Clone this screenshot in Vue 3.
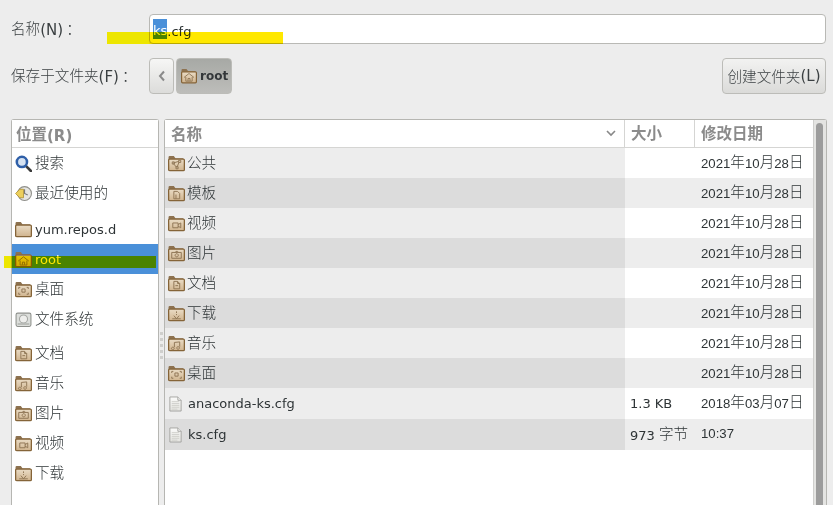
<script setup>
const emblems = {
  share: 'M5 7.500l5-1.500M5 8l3 3.500M10.500 6.500l-2 5M4 6.500h2v2H4zM10 5h2v2h-2zM7.500 11h2v2h-2z',
  template: 'M5.500 6h3.500l2 2v5H5.500zM7.500 9v4',
  video: 'M4.500 7.500h5v4.500h-5zM9.500 9l2.500-1.500v4.500L9.500 10.500',
  picture: 'M3.500 7h9v5.500h-9zM6.500 7l1-1h1.500l1 1M8.200 8.200a1.500 1.500 0 1 0 .01 0',
  document: 'M5.500 6h3.500l2 2v5H5.500zM9 6v2h2M7 10h2.500',
  download: 'M8 6v1.500M8 8.500v1M5.500 10l2.500 3 2.500-3M4 13h8',
  music: 'M6 7v4.500M11 6.500v4.500M6 7l5-.500M4.500 11.500a1.300 1.200 0 1 0 .01 0M9.500 11a1.300 1.200 0 1 0 .01 0',
  desktop: 'M3.500 7.500V6h1.500M11 6h1.500v1.500M12.500 11v1.500H11M5 12.500H3.500V11M6.500 7.500h3v3h-3z',
  home: 'M3 9.500L8 5.500l5 4M4.800 9v4.200h6.400V9M7 13v-2.500h2V13',
}

const places = [
  { name: '搜索', icon: 'search' },
  { name: '最近使用的', icon: 'recent', gap: true },
  { name: 'yum.repos.d', icon: 'folder' },
  { name: 'root', icon: 'folder', emblem: 'home', active: true },
  { name: '桌面', icon: 'folder', emblem: 'desktop' },
  { name: '文件系统', icon: 'disk', sep: true },
  { name: '文档', icon: 'folder', emblem: 'document' },
  { name: '音乐', icon: 'folder', emblem: 'music' },
  { name: '图片', icon: 'folder', emblem: 'picture' },
  { name: '视频', icon: 'folder', emblem: 'video' },
  { name: '下载', icon: 'folder', emblem: 'download' },
]

const files = [
  { name: '公共', emblem: 'share', size: '', date: '2021年10月28日' },
  { name: '模板', emblem: 'template', size: '', date: '2021年10月28日' },
  { name: '视频', emblem: 'video', size: '', date: '2021年10月28日' },
  { name: '图片', emblem: 'picture', size: '', date: '2021年10月28日' },
  { name: '文档', emblem: 'document', size: '', date: '2021年10月28日' },
  { name: '下载', emblem: 'download', size: '', date: '2021年10月28日' },
  { name: '音乐', emblem: 'music', size: '', date: '2021年10月28日' },
  { name: '桌面', emblem: 'desktop', size: '', date: '2021年10月28日' },
  { name: 'anaconda-ks.cfg', file: true, size: '1.3 KB', date: '2018年03月07日' },
  { name: 'ks.cfg', file: true, size: '973 字节', date: '10:37' },
]

// CJK is drawn a little larger than latin in this theme, so split the runs
const runs = (text) => (text.match(/[\u4e00-\u9fff]+|[^\u4e00-\u9fff]+/g) || []).map((t) => ({ t, zh: /[\u4e00-\u9fff]/.test(t) }))
</script>

<template>
  <div class="dialog">
    <svg class="defs" width="0" height="0" aria-hidden="true">
      <defs>
        <linearGradient id="folderBody" x1="0" y1="0" x2="0" y2="1">
          <stop offset="0" stop-color="#eadcc6" />
          <stop offset="1" stop-color="#d0b48e" />
        </linearGradient>
        <linearGradient id="paper" x1="0" y1="0" x2="0" y2="1">
          <stop offset="0" stop-color="#fbfbfa" />
          <stop offset="1" stop-color="#e4e4e0" />
        </linearGradient>
      </defs>
    </svg>

    <div class="form-row name-row">
      <label class="form-label"><span class="zh">名称</span>(N)<span class="zh colon">：</span></label>
      <div class="entry"><span class="selected">ks</span>.cfg</div>
    </div>

    <div class="form-row folder-row">
      <label class="form-label"><span class="zh">保存于文件夹</span>(F)<span class="zh colon">：</span></label>
      <button type="button" class="btn back-btn" aria-label="back">
        <svg width="8" height="12" viewBox="0 0 8 12"><path d="M6 1.500L2 6l4 4.500" fill="none" stroke="#8a8a8a" stroke-width="2" /></svg>
      </button>
      <button type="button" class="btn path-btn">
        <svg class="ico" width="16" height="16" viewBox="0 0 16 16">
          <path d="M.5 14V2q0-1 1-1h4l1.500 2h7q.5 0 .5 1V14z" fill="#8d7250" />
          <rect x=".6" y="3.800" width="14.800" height="11" rx="1" fill="url(#folderBody)" stroke="#856438" stroke-width="1.200" />
          <path :d="emblems.home" fill="none" stroke="#8f7655" stroke-width=".9" />
        </svg>
        <span>root</span>
      </button>
      <button type="button" class="btn create-btn"><span class="zh">创建文件夹</span>(L)</button>
    </div>

    <div class="panes">
      <aside class="sidebar">
        <div class="col-head side-head"><span class="zh">位置</span>(R)</div>
        <ul class="places">
          <li v-for="p in places" :key="p.name" :class="['place', { active: p.active, gap: p.gap, sep: p.sep }]">
            <svg class="ico" width="17" height="17" viewBox="0 0 16 16">
              <template v-if="p.icon === 'folder'">
                <path d="M.5 14V2q0-1 1-1h4l1.500 2h7q.5 0 .5 1V14z" fill="#8d7250" />
                <rect x=".6" y="3.800" width="14.800" height="11" rx="1" fill="url(#folderBody)" stroke="#856438" stroke-width="1.200" />
                <path v-if="p.emblem" :d="emblems[p.emblem]" fill="none" stroke="#8f7655" stroke-width=".9" />
              </template>
              <template v-else-if="p.icon === 'search'">
                <path d="M10 10l5 5" stroke="#3a3a3a" stroke-width="2.500" stroke-linecap="round" />
                <circle cx="6.500" cy="6.500" r="4.800" fill="#d5e2f2" stroke="#2f5fa8" stroke-width="2.400" />
              </template>
              <template v-else-if="p.icon === 'recent'">
                <circle cx="9" cy="8" r="6.500" fill="#e6e6e2" stroke="#8f8f8a" />
                <path d="M9 4v4l3 1.500" fill="none" stroke="#777" />
                <path d="M.5 8l4-4h3.500v8H4.500z" fill="#eccf5c" stroke="#a88a2a" stroke-width=".7" />
              </template>
              <template v-else>
                <rect x="1" y="2" width="14" height="12.500" rx="1.500" fill="#dcdedb" stroke="#8e908c" />
                <circle cx="8" cy="7.500" r="3.800" fill="#eeeeec" stroke="#a4a6a2" />
                <path d="M2.500 11.500h11v1.500h-11z" fill="#b3b5b1" />
              </template>
            </svg>
            <span class="label"><span v-for="r in runs(p.name)" :key="r.t" :class="{ zh: r.zh }">{{ r.t }}</span></span>
          </li>
        </ul>
      </aside>

      <div class="grip"><i v-for="n in 5" :key="n"></i></div>

      <section class="browser">
        <div class="list">
          <div class="list-head">
            <div class="col-head c-name"><span class="zh">名称</span>
              <svg width="10" height="7" viewBox="0 0 10 7"><path d="M1 1l4 4 4-4" fill="none" stroke="#888" stroke-width="1.600" /></svg>
            </div>
            <div class="col-head c-size"><span class="zh">大小</span></div>
            <div class="col-head c-date"><span class="zh">修改日期</span></div>
          </div>
          <div v-for="f in files" :key="f.name" :class="['file-row', { plain: f.file }]">
            <div class="c-name cell">
              <svg v-if="f.file" class="ico file-ico" width="15" height="18" viewBox="0 0 16 18">
                <path d="M2 1.500h8.500l3.500 3.500v11.500H2z" fill="url(#paper)" stroke="#a3a3a0" stroke-linejoin="round" />
                <path d="M10.500 1.500V5H14" fill="#f4f4f2" stroke="#a3a3a0" />
                <path d="M4 6.500h8M4 8.500h8M4 10.500h8M4 12.500h8M4 14.500h6" stroke="#cfcfcb" />
              </svg>
              <svg v-else class="ico" width="17" height="17" viewBox="0 0 16 16">
                <path d="M.5 14V2q0-1 1-1h4l1.500 2h7q.5 0 .5 1V14z" fill="#8d7250" />
                <rect x=".6" y="3.800" width="14.800" height="11" rx="1" fill="url(#folderBody)" stroke="#856438" stroke-width="1.200" />
                <path :d="emblems[f.emblem]" fill="none" stroke="#8f7655" stroke-width=".9" />
              </svg>
              <span class="label"><span v-for="r in runs(f.name)" :key="r.t" :class="{ zh: r.zh }">{{ r.t }}</span></span>
            </div>
            <div class="c-size cell"><span class="text"><span v-for="r in runs(f.size)" :key="r.t" :class="{ zh: r.zh }">{{ r.t }}</span></span></div>
            <div class="c-date cell date"><span class="text"><span v-for="r in runs(f.date)" :key="r.t" :class="{ zh: r.zh }">{{ r.t }}</span></span></div>
          </div>
        </div>
        <div class="scrollbar"><div class="thumb"></div></div>
      </section>
    </div>

    <div class="marker marker-name"></div>
    <div class="marker marker-root"></div>
  </div>
</template>

<style scoped>
.dialog { position: relative; box-sizing: border-box; width: 833px; height: 505px; padding-top: 14px; overflow: hidden; background: #ededed; color: #2e3436; font: 13px "DejaVu Sans", "Noto Sans CJK SC", sans-serif; }
.defs { position: absolute; }
.zh { font-size: 14.6px; line-height: 1; vertical-align: 1px; font-family: "Noto Sans CJK SC", sans-serif; font-weight: 300; }
.form-row { display: flex; align-items: center; padding: 0 7px 0 11px; }
.form-label { width: 138px; flex: none; margin-top: 2px; color: #3a3f41; font-size: 15px; white-space: nowrap; }
.colon { margin-left: 3px; }
.name-row { height: 30px; }
.folder-row { height: 36px; margin-top: 14px; }
.entry { box-sizing: border-box; flex: 1; height: 30px; padding: 0 0 0 3px; border: 1px solid #b9b9b5; border-radius: 4px; background: #fff; line-height: 33px; }
.selected { display: inline-block; height: 20px; line-height: 23px; background: #4a90d9; color: #fff; vertical-align: 1px; }
.btn { box-sizing: border-box; height: 36px; padding: 0; border: 1px solid #bcbcb8; border-radius: 4px; color: inherit; font: inherit; display: flex; align-items: center; justify-content: center; }
.back-btn { width: 25px; background: linear-gradient(#f6f6f5, #dcdcda); }
.path-btn { width: 56px; margin-left: 2px; padding-left: 4px; justify-content: flex-start; gap: 3px; background: linear-gradient(#a7a9a5, #bdbdba); font-size: 12px; font-weight: 700; color: #33373a; }
.create-btn { width: 104px; margin-left: auto; background: linear-gradient(#f2f2f1, #dbdbd9); white-space: nowrap; color: #3a3f41; font-size: 15px; }
.create-btn .zh { font-size: 14.6px; }

.panes { display: flex; height: 386px; margin-top: 25px; padding-left: 11px; padding-right: 6px; }
.sidebar { box-sizing: border-box; flex: none; width: 148px; border: 1px solid #b6b6b2; border-bottom: 0; border-radius: 3px 3px 0 0; background: #fff; }
.col-head { box-sizing: border-box; height: 28px; line-height: 31px; background: #fff; color: #8b8b8b; font-weight: 700; border-bottom: 1px solid #d5d5d3; }
.col-head .zh { font-size: 15.5px; font-weight: 700; }
.side-head { padding-left: 4px; font-size: 15px; line-height: 32px; }
.places { margin: 0; padding: 0; list-style: none; }
.place { display: flex; align-items: center; height: 30px; padding-left: 3px; }
.place.gap { margin-bottom: 6px; }
.place.sep { margin-bottom: 4px; }
.place.active { background: #4a90d9; color: #fff; }
.ico { flex: none; }
.label { margin-left: 3px; white-space: nowrap; }
.grip { flex: none; width: 5px; display: flex; flex-direction: column; justify-content: center; align-items: center; gap: 3px; padding-top: 66px; box-sizing: border-box; }
.grip i { width: 3px; height: 3px; background: #cfcfcd; }

.browser { flex: 1; display: flex; box-sizing: border-box; border: 1px solid #b6b6b2; border-bottom: 0; border-radius: 3px 3px 0 0; background: #fff; }
.list { flex: 1; min-width: 0; }
.list-head { display: flex; height: 28px; }
.list-head .col-head { border-right: 1px solid #d5d5d3; }
.list-head .c-name { display: flex; align-items: center; justify-content: space-between; padding: 0 8px 0 6px; }
.list-head .c-size, .list-head .c-date { padding-left: 6px; }
.list-head .c-date { border-right: 0; }
.c-name { box-sizing: border-box; width: 460px; flex: none; }
.c-size { box-sizing: border-box; width: 70px; flex: none; }
.c-date { box-sizing: border-box; flex: 1; }
.file-row { display: flex; height: 30px; background: #ededed; }
.file-row.plain { height: 31px; }
.file-row .c-name { background: #ededed; }
.file-row:nth-child(even) { background: #fff; }
.file-row:nth-child(odd) .c-name { background: #dcdcdc; }
.cell { display: flex; align-items: center; padding-left: 5px; white-space: nowrap; }
.file-row .c-name.cell { padding-left: 3px; }
.file-row .c-name .label { margin-left: 2px; }
.file-row .c-name .file-ico { margin-right: 3px; }
.file-row .c-date.cell { padding-left: 6px; }
.date { font-family: "Liberation Sans", sans-serif; font-size: 13.2px; }
.date .text { margin-bottom: 2px; }
.scrollbar { flex: none; width: 13px; padding-top: 3px; box-sizing: border-box; background: #e4e4e2; border-left: 1px solid #cfcfcd; }
.thumb { width: 7px; height: 100%; margin-left: 2px; border-radius: 4px 4px 0 0; background: #9c9c9c; }

.marker { position: absolute; mix-blend-mode: multiply; }
.marker-name { left: 107px; top: 32px; width: 176px; height: 12px; background: linear-gradient(90deg, #fff800 42px, #ffe800 42px); }
.marker-root { left: 4px; top: 256px; width: 152px; height: 12px; background: linear-gradient(90deg, #fff800 8px, #ffe800 8px); }
</style>
